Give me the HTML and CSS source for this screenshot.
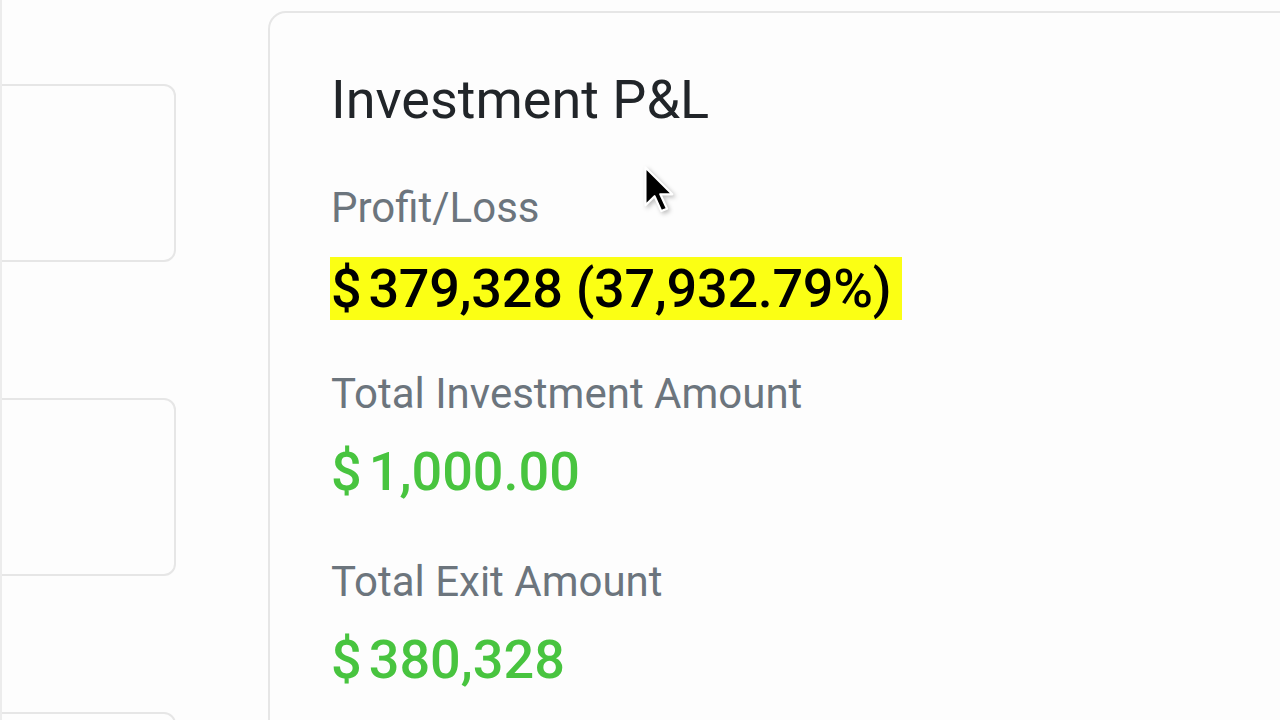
FILE: index.html
```html
<!DOCTYPE html>
<html lang="en">
<head>
<meta charset="utf-8">
<title>Investment P&amp;L</title>
<link rel="stylesheet" href="styles.css">
</head>
<body>
<div class="page">
  <aside class="side">
    <div class="side-card"></div>
    <div class="side-card"></div>
    <div class="side-card"></div>
  </aside>
  <main class="card">
    <h1 class="title">Investment P&amp;L</h1>
    <div class="label label-first">Profit/Loss</div>
    <div class="value-row"><span class="value highlight"><span class="cur">$</span>379,328 (37,932.79%)</span></div>
    <div class="label label-inv">Total Investment Amount</div>
    <div class="value green"><span class="cur">$</span>1,000.00</div>
    <div class="label label-exit">Total Exit Amount</div>
    <div class="value green"><span class="cur">$</span>380,328</div>
  </main>
</div>
<svg class="cursor" width="30" height="48" viewBox="0 0 12.5 20" aria-hidden="true">
  <path d="M0.6 0.6 L0.6 16.4 L4.4 12.6 L7.2 18.8 L9.6 17.8 L6.8 11.8 L11.8 11.8 Z" fill="#000" stroke="#fff" stroke-width="0.9" stroke-linejoin="round"/>
</svg>
</body>
</html>
```
FILE: styles.css
```css
html, body {
  margin: 0;
  padding: 0;
  background: #fdfdfd;
  height: 100%;
  overflow: hidden;
}
body {
  font-family: Roboto, "Noto Sans", "Liberation Sans", sans-serif;
  position: relative;
}
.page {
  display: flex;
  align-items: flex-start;
  gap: 92px;
  border-left: 2px solid #ececec;
  height: 720px;
  box-sizing: border-box;
  overflow: hidden;
}
.side {
  display: flex;
  flex-direction: column;
  gap: 136px;
  margin-left: -40px;
  padding-top: 84px;
  flex: none;
}
.side-card {
  width: 210px;
  height: 174px;
  border: 2px solid #e6e6e6;
  border-radius: 12px;
  background: #fdfdfd;
}
.card {
  flex: 1;
  margin-top: 11px;
  margin-right: -40px;
  min-height: 760px;
  border: 2px solid #e6e6e6;
  border-radius: 18px;
  background: #fdfdfd;
  padding: 60px 0 0 61px;
}
.title {
  margin: 0;
  font-size: 54px;
  font-weight: 400;
  line-height: 1;
  color: #212529;
}
.label {
  font-size: 42px;
  line-height: 1;
  color: #6c757d;
}
.label-first {
  margin-top: 60px;
}
.label-inv {
  margin-top: 53px;
}
.label-exit {
  margin-top: 57px;
}
.value-row {
  margin-top: 28px;
  line-height: 0;
}
.value {
  font-size: 54px;
  font-weight: 500;
  line-height: 1.172;
}
.cur {
  margin-right: 7px;
}
.highlight {
  display: inline-block;
  padding: 0 11px 0 1px;
  margin-left: -1px;
  letter-spacing: -0.3px;
  background: #fbff14;
  color: #000;
}
.green {
  color: #48c43f;
  margin-top: 25px;
}
.cursor {
  position: absolute;
  left: 644px;
  top: 166px;
  filter: drop-shadow(2px 2px 2px rgba(0, 0, 0, 0.25));
}
```
